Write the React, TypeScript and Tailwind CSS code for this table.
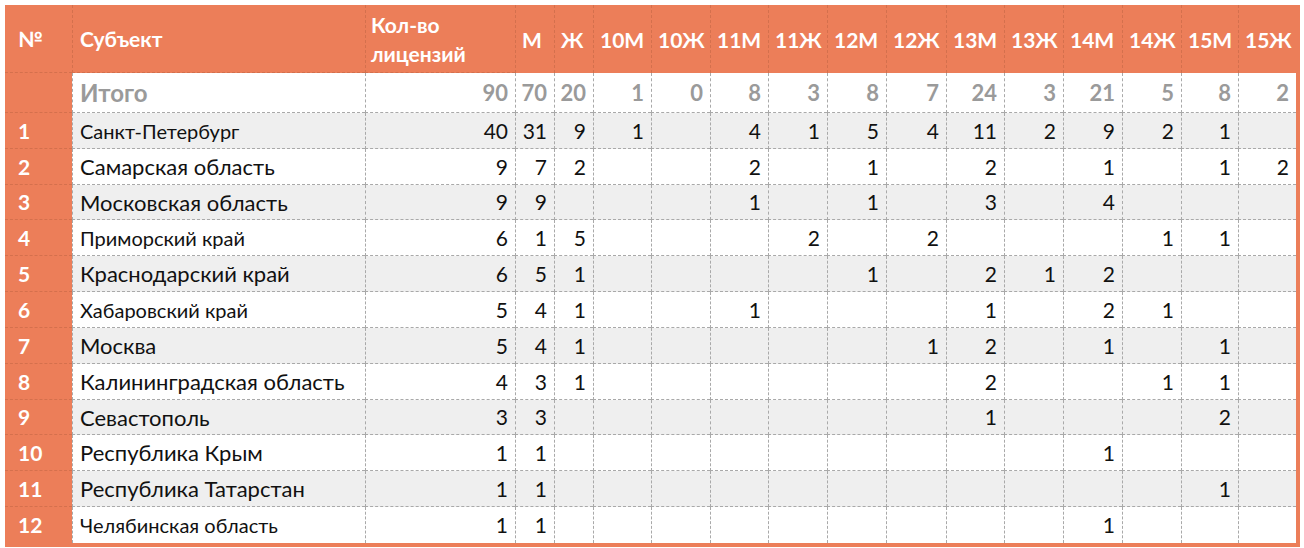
// Таблица лицензий по субъектам — orange header, dashed grid, zebra rows.
import React from 'react';

type Cell = number | '';

interface Row {
  name: string;
  small?: boolean;
  h: string;
  values: Cell[];
}

const HEADERS = ['М', 'Ж', '10М', '10Ж', '11М', '11Ж', '12М', '12Ж', '13М', '13Ж', '14М', '14Ж', '15М', '15Ж'];

// widths of the 14 narrow columns (М .. 15Ж)
const NARROW_W = [
  'w-[39px]', 'w-[39px]', 'w-[58px]', 'w-[59px]', 'w-[58px]', 'w-[59px]', 'w-[59px]',
  'w-[60px]', 'w-[58px]', 'w-[59px]', 'w-[59px]', 'w-[59px]', 'w-[57px]', 'w-[58px]',
];

const TOTALS: number[] = [90, 70, 20, 1, 0, 8, 3, 8, 7, 24, 3, 21, 5, 8, 2];

const ROWS: Row[] = [
  { name: 'Санкт-Петербург', small: true, h: 'h-[36px]', values: [40, 31, 9, 1, '', 4, 1, 5, 4, 11, 2, 9, 2, 1, ''] },
  { name: 'Самарская область', h: 'h-[36px]', values: [9, 7, 2, '', '', 2, '', 1, '', 2, '', 1, '', 1, 2] },
  { name: 'Московская область', h: 'h-[35px]', values: [9, 9, '', '', '', 1, '', 1, '', 3, '', 4, '', '', ''] },
  { name: 'Приморский край', small: true, h: 'h-[36px]', values: [6, 1, 5, '', '', '', 2, '', 2, '', '', '', 1, 1, ''] },
  { name: 'Краснодарский край', h: 'h-[36px]', values: [6, 5, 1, '', '', '', '', 1, '', 2, 1, 2, '', '', ''] },
  { name: 'Хабаровский край', small: true, h: 'h-[36px]', values: [5, 4, 1, '', '', 1, '', '', '', 1, '', 2, 1, '', ''] },
  { name: 'Москва', h: 'h-[36px]', values: [5, 4, 1, '', '', '', '', '', 1, 2, '', 1, '', 1, ''] },
  { name: 'Калининградская область', h: 'h-[36px]', values: [4, 3, 1, '', '', '', '', '', '', 2, '', '', 1, 1, ''] },
  { name: 'Севастополь', h: 'h-[35px]', values: [3, 3, '', '', '', '', '', '', '', 1, '', '', '', 2, ''] },
  { name: 'Республика Крым', h: 'h-[36px]', values: [1, 1, '', '', '', '', '', '', '', '', '', 1, '', '', ''] },
  { name: 'Республика Татарстан', h: 'h-[36px]', values: [1, 1, '', '', '', '', '', '', '', '', '', '', '', 1, ''] },
  { name: 'Челябинская область', small: true, h: 'h-[36px]', values: [1, 1, '', '', '', '', '', '', '', '', '', 1, '', '', ''] },
];

const GRID = 'border-dashed border-[#a9a9a9]';
const GRID_ORANGE = 'border-dashed border-[#d4704d]';

export default function App() {
  return (
    <div className="p-[5px] bg-white font-['Lato','Noto_Sans',sans-serif]">
      <div className="w-[1295px] bg-[#ec7e59] pr-[4px] pb-[4px]">
        <table className="w-[1291px] table-fixed border-separate border-spacing-0">
          <colgroup>
            <col className="w-[67px]" />
            <col className="w-[293px]" />
            <col className="w-[150px]" />
            {NARROW_W.map((w, i) => (
              <col key={i} className={w} />
            ))}
          </colgroup>
          <thead>
            <tr className="h-[68px] text-white font-bold text-[21px] leading-[29px]">
              <th className={`text-left align-middle pl-[13px] border-b ${GRID_ORANGE}`}>№</th>
              <th className={`text-left align-middle pl-[7px] border-l border-b ${GRID_ORANGE}`}>Субъект</th>
              <th className={`text-left align-middle pl-[5px] border-l border-b ${GRID_ORANGE}`}>
                Кол-во
                <br />
                лицензий
              </th>
              {HEADERS.map((h) => (
                <th key={h} className={`text-left align-middle pl-[6px] whitespace-nowrap border-l ${GRID_ORANGE}`}>
                  {h}
                </th>
              ))}
            </tr>
          </thead>
          <tbody>
            <tr className="h-[40px]">
              <td className={`bg-[#ec7e59] border-b ${GRID_ORANGE}`} />
              <td className={`bg-white pl-[7px] text-[24px] font-bold text-[#9a9a9a] border-l border-b ${GRID}`}>Итого</td>
              {TOTALS.map((v, i) => (
                <td
                  key={i}
                  className={`bg-white text-right pr-[7px] text-[22px] font-bold text-[#9a9a9a] border-b ${GRID} ${i === 0 ? 'border-l' : 'border-l'}`}
                >
                  {v}
                </td>
              ))}
            </tr>
            {ROWS.map((r, ri) => {
              const last = ri === ROWS.length - 1;
              const bg = ri % 2 === 0 ? 'bg-[#efefef]' : 'bg-white';
              const bottom = last ? '' : 'border-b';
              return (
                <tr key={r.name} className={r.h}>
                  <td className={`bg-[#ec7e59] pl-[13px] text-white font-bold text-[21px] ${bottom} ${GRID_ORANGE}`}>
                    {ri + 1}
                  </td>
                  <td
                    className={`${bg} pl-[7px] text-[#111] whitespace-nowrap border-l ${bottom} ${GRID} ${
                      r.small ? 'text-[20px]' : 'text-[22px]'
                    }`}
                  >
                    {r.name}
                  </td>
                  {r.values.map((v, i) => (
                    <td key={i} className={`${bg} text-right pr-[7px] text-[21px] text-[#111] border-l ${bottom} ${GRID}`}>
                      {v}
                    </td>
                  ))}
                </tr>
              );
            })}
          </tbody>
        </table>
      </div>
    </div>
  );
}
